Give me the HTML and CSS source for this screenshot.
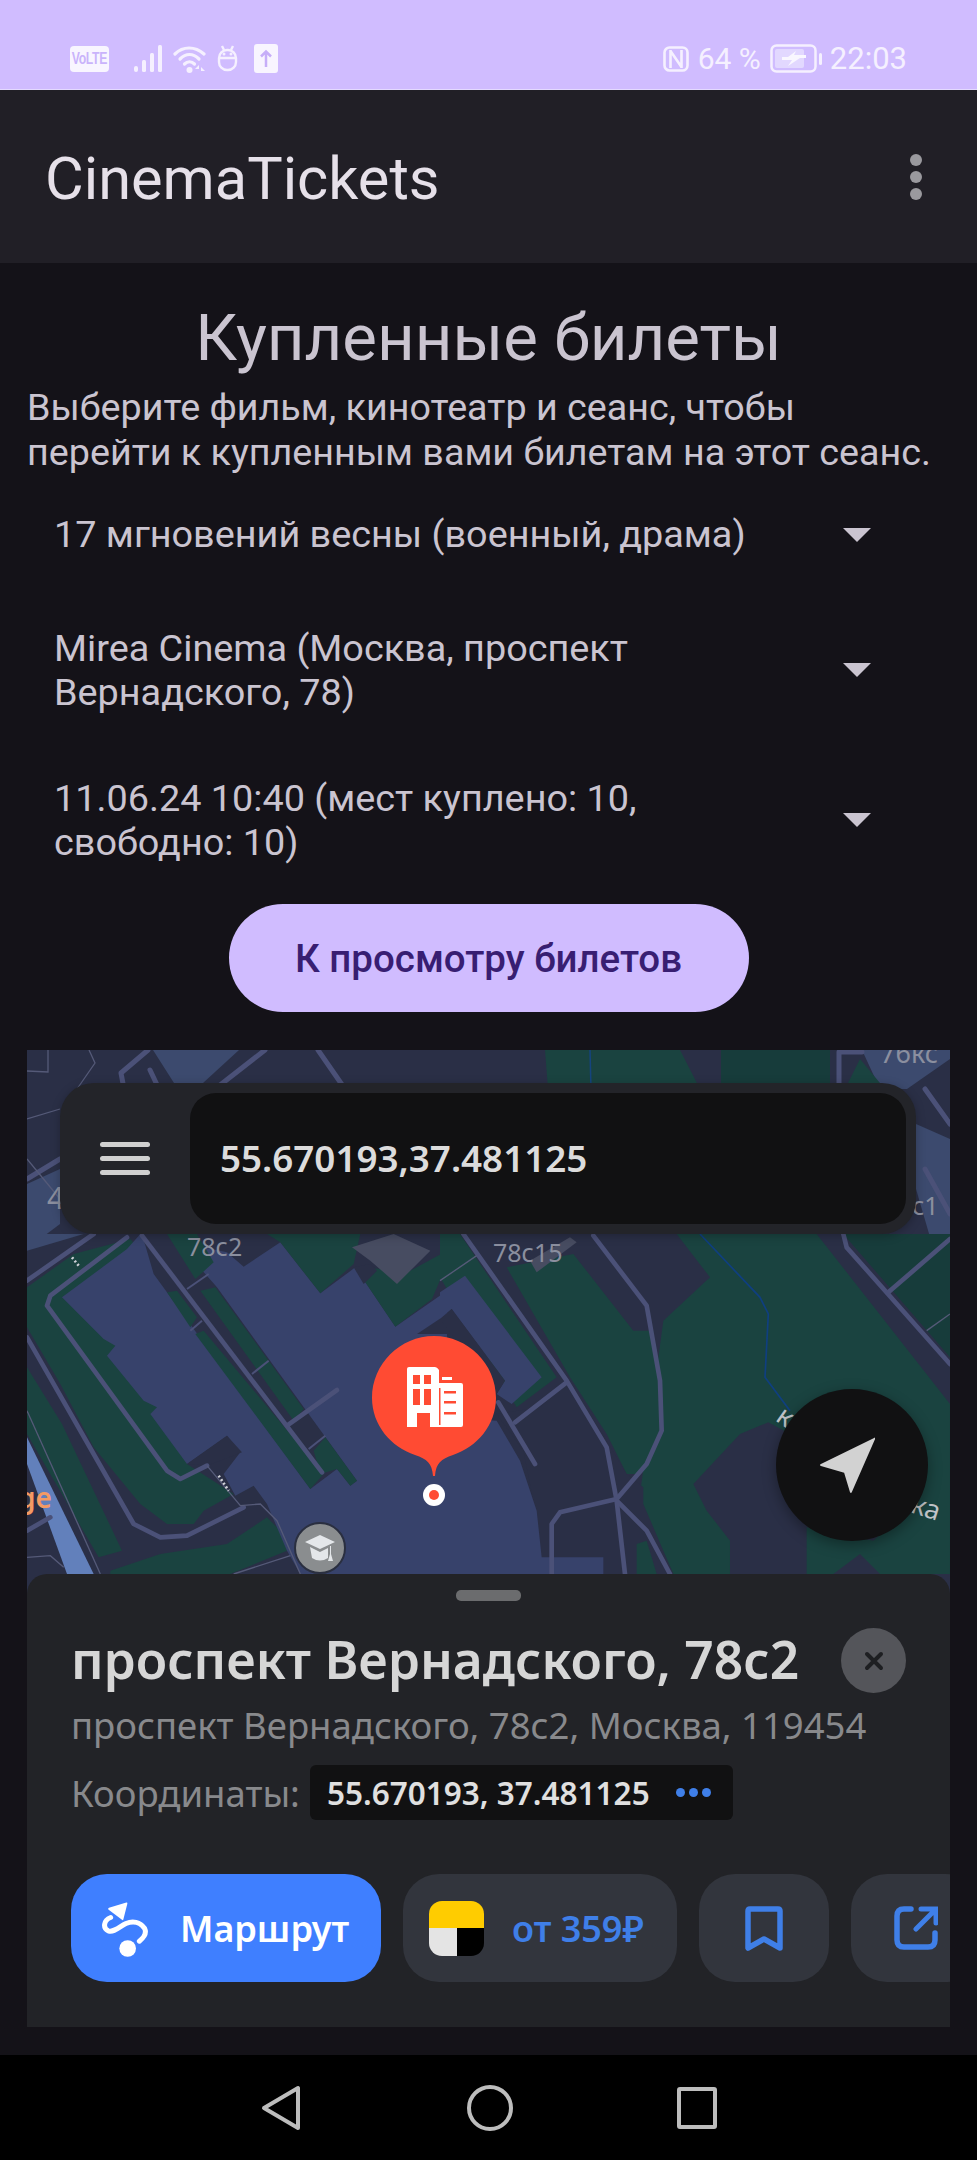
FILE: index.html
```html
<!DOCTYPE html>
<html lang="ru">
<head>
<meta charset="utf-8">
<title>CinemaTickets</title>
<link rel="stylesheet" href="styles.css">
</head>
<body>
<div class="phone">
  <header class="status">
    <div class="status-left">
      <span class="volte"><b>VoLTE</b></span>
      <svg class="ic-signal" viewBox="0 0 29 27"><g fill="#f5f0ff"><rect x="0" y="21" width="4" height="6" rx="2"/><rect x="8" y="15" width="4" height="12" rx="1.5"/><rect x="16" y="8" width="4" height="19" rx="1.5"/><rect x="24" y="0" width="4" height="27" rx="1.5"/></g></svg>
      <svg class="ic-wifi" viewBox="0 0 34 28"><g fill="none" stroke="#f5f0ff" stroke-width="3.2" stroke-linecap="round"><path d="M2 9C10 1 22 1 31 9"/><path d="M7 14C13 8 20 8 26 14"/><path d="M11.500 19C14.500 16 18.500 16 21.500 19"/></g><circle cx="16.500" cy="25" r="3" fill="#f5f0ff"/><path d="M26 20l-4 4h4zM28 22l4 4-4 0z" fill="#f5f0ff"/></svg>
      <svg class="ic-robot" viewBox="0 0 21 27"><g fill="none" stroke="#f5f0ff" stroke-width="2.400"><rect x="2" y="5" width="17" height="20" rx="8"/><path d="M2 13H19M5 1l2 4M16 1l-2 4"/></g><circle cx="7" cy="9" r="1.500" fill="#f5f0ff"/><circle cx="14" cy="9" r="1.500" fill="#f5f0ff"/></svg>
      <svg class="ic-up" viewBox="0 0 24 29"><rect width="24" height="29" rx="3" fill="#f8f5ff"/><path d="M12 23V8M7 12.500l5-5 5 5" fill="none" stroke="#c6aef8" stroke-width="2.500"/></svg>
    </div>
    <div class="status-right">
      <svg class="ic-nfc" viewBox="0 0 26 26"><rect x="1.500" y="1.500" width="23" height="23" rx="5" fill="none" stroke="#f5f0ff" stroke-width="2.600"/><path d="M7.500 4V22M18.500 4V22M7.500 5L18.500 21" fill="none" stroke="#f5f0ff" stroke-width="2.600"/></svg>
      <span class="pct">64 %</span>
      <svg class="ic-batt" viewBox="0 0 52 29"><rect x="1.500" y="1.500" width="44" height="26" rx="5" fill="none" stroke="#f5f0ff" stroke-width="2.500"/><rect x="5" y="5" width="29" height="19" rx="2" fill="#e2d8ff"/><path d="M26 7l-8 6h-6v3h10l-4 6 12-8h6v-3H24z" fill="#f9f7ff"/><rect x="49" y="9" width="3" height="12" rx="1.500" fill="#f5f0ff"/></svg>
      <span class="time">22:03</span>
    </div>
  </header>

  <div class="appbar">
    <span class="app-title">CinemaTickets</span>
    <div class="kebab"><i></i><i></i><i></i></div>
  </div>

  <main class="content">
    <h1 class="heading">Купленные билеты</h1>
    <p class="lead">Выберите фильм, кинотеатр и сеанс, чтобы перейти к купленным вами билетам на этот сеанс.</p>

    <div class="select"><span class="select-text">17 мгновений весны (военный, драма)</span><i class="caret"></i></div>
    <div class="select"><span class="select-text">Mirea Cinema (Москва, проспект Вернадского, 78)</span><i class="caret"></i></div>
    <div class="select"><span class="select-text">11.06.24 10:40 (мест куплено: 10, свободно: 10)</span><i class="caret"></i></div>

    <div class="cta-wrap"><button class="cta">К просмотру билетов</button></div>

    <section class="map">
      <svg class="map-art" viewBox="27 1051 923 549">
        <rect x="27" y="1051" width="923" height="549" fill="#2a2f46"/>

        <!-- top strip and side strips, in page pixels -->
        <polygon class="slate" points="153,1051 239,1051 203,1084 174,1084"/>
        <polygon class="green" points="545,1051 680,1051 700,1090 548,1090"/>
        <polygon class="green2" points="721,1051 830,1051 830,1090 721,1090"/>
        <polygon class="slate" points="862,1051 950,1051 950,1060 907,1090 880,1090"/>
        <polygon class="green" points="845,1090 860,1060 885,1090"/>
        <polygon class="slate" points="916,1125 950,1140 950,1245 932,1245 916,1190"/>
        <polygon class="slate" points="27,1185 60,1170 60,1225 40,1240 27,1235"/>
        <g class="road r-page">
          <polyline points="148,1051 121,1074 124,1090"/>
          <polyline points="150,1071 159,1090"/>
          <polyline points="265,1051 215,1090"/>
          <polyline points="318,1051 345,1090"/>
          <polyline points="839,1090 839,1053 862,1053"/>
          <polyline points="925,1090 950,1125"/>
          <polyline points="925,1170 950,1215"/>
          <polyline points="27,1180 60,1160"/>
        </g>
        <g class="thin t-page">
          <polyline points="27,1072 48,1073 48,1051"/>
          <polyline points="89,1051 95,1064 77,1090"/>
          <polyline points="27,1120 60,1110"/>
          <polyline points="27,1160 60,1200"/>
        </g>
        <polyline class="water w-page" points="590,1051 591,1090"/>

        <!-- left half of the lower map: 3 units per page pixel -->
        <g transform="translate(27 1235) scale(.33333)">
          <polygon class="slate" points="0,0 170,0 0,50"/>
          <polygon class="green" points="0,160 140,60 310,15 400,120 400,300 480,690 620,780 530,830 500,870 420,870 340,810 200,640 100,450 0,280"/>
          <polygon class="green" points="0,400 105,570 285,950 215,970 0,600"/>
          <polygon class="green" points="250,1020 250,1010 400,960 600,930 720,850 770,900 780,950 610,1020"/>
          <polygon class="blue" points="340,0 600,55 650,98 760,25 880,178 985,100 1105,278 1260,170 1260,1020 820,1020 780,950 720,810 680,755 625,785 590,720 640,655 600,605 480,690 370,540 390,520 350,500 240,365 265,335 230,315 105,190 300,45"/>
          <polygon class="dark" points="345,0 430,0 570,160 990,740 970,755 930,705 850,765 380,120"/>
          <polygon class="green" points="420,0 510,0 560,85 505,135"/>
          <polygon class="green" points="420,175 450,170 510,250 490,280"/>
          <polygon class="green" points="520,170 565,160 830,525 800,560"/>
          <polygon class="green" points="505,300 530,290 890,720 850,765"/>
          <polygon class="green" points="860,650 895,610 990,740 970,755 930,705 880,720"/>
          <polygon class="green" points="720,0 1000,0 980,90 880,178 760,25"/>
          <polygon class="green" points="985,100 1150,110 1260,50 1260,90 1215,195 1105,278"/>
          <polygon class="bldg" points="975,40 1100,0 1210,50 1110,150 1030,80"/>
          <polygon class="dark" points="980,100 1030,90 1050,110 1010,150"/>
          <polygon class="dark" points="1170,300 1260,240 1260,300"/>
          <polygon class="dark" points="480,690 600,605 645,655 540,695 480,690"/>
          <polygon class="river" points="0,610 0,690 120,1020 200,1020"/>
          <polyline class="road" points="0,140 200,0"/>
          <polyline class="road" points="300,10 70,185 60,215 420,710 460,735 540,695"/>
          <polyline class="road" points="0,310 320,870 400,910 480,905 650,820"/>
          <polyline class="road" points="345,5 885,715"/>
          <polyline class="road" points="780,575 930,468"/>
          <polyline class="road" points="0,890 70,850"/>
          <polyline class="bar" points="480,165 545,120"/>
          <polyline class="bar" points="490,290 525,260"/>
          <polyline class="bar" points="675,420 725,380"/>
          <polyline class="bar" points="845,645 895,605"/>
          <polyline class="line" points="540,695 640,815 700,810 750,860 820,1020"/>
          <polyline class="line" points="0,530 220,1020"/>
          <polyline class="line" points="620,1020 790,965"/>
          <polyline class="line" points="0,970 70,965 110,1000"/>
          <polyline class="dots" points="575,725 605,770"/>
          <polyline class="dots" points="135,70 155,95"/>
        </g>

        <!-- right half of the lower map -->
        <g transform="translate(440 1235) scale(.33333)">
          <polygon class="green" points="780,0 1130,0 1530,510 1530,1020 700,1020 610,820 600,780 670,260 810,130 710,0"/>
          <polygon class="green2" points="1210,0 1530,0 1530,370"/>
          <polygon class="green" points="200,100 400,60 580,290 640,290 665,590 600,720 560,720 500,600 390,430"/>
          <polygon class="green" points="0,0 60,0 350,430 230,520 0,130"/>
          <polygon class="blue" points="0,175 75,125 305,430 215,510 170,480 195,440 35,225 0,255"/>
          <polygon class="dark" points="0,255 35,225 195,440 170,480"/>
          <polygon class="dark" points="300,520 380,440 500,620 560,720 610,760 610,810 700,1020 300,1020 290,850 250,650 170,540"/>
          <polygon class="blue" points="0,550 170,560 240,680 290,830 305,970 490,970 490,1020 0,1020"/>
          <polygon class="dark" points="760,750 900,600 985,565 1050,600 1240,700 1430,800 1300,920 1100,880 1100,1020 870,1020 870,920 800,830"/>
          <polygon class="dark" points="1180,1020 1260,960 1320,1020"/>
          <polygon class="green" points="590,1020 590,930 620,920 650,1020"/>
          <polygon class="bldg" points="270,80 390,10 410,25 290,115"/>
          <polyline class="road" points="70,0 380,440 500,640 530,800 555,1020"/>
          <polyline class="road" points="460,5 620,215 660,440 665,590 620,690 530,795 360,835 335,870 335,1020"/>
          <polyline class="road" points="530,800 620,890 690,1020"/>
          <polyline class="road" points="380,445 225,565"/>
          <polyline class="road" points="175,505 285,690"/>
          <polyline class="road" points="1210,0 1220,40 1530,390"/>
          <polyline class="road" points="1345,175 1530,15"/>
          <polyline class="line" points="0,140 110,65"/>
          <polyline class="line" points="1460,290 1530,240"/>
          <polyline class="stream" points="780,0 960,190 985,240 975,430 1050,530"/>
        </g>
      </svg>

      <span class="lbl lbl-a">78с2</span>
      <span class="lbl lbl-b">78с15</span>
      <span class="lbl lbl-c">4</span>
      <span class="lbl lbl-d">с1</span>
      <span class="lbl lbl-e">76кс</span>
      <span class="lbl lbl-f">ка</span>
      <span class="lbl lbl-g">к</span>
      <span class="lbl-org">ge</span>

      <svg class="pin" viewBox="0 0 130 210">
        <path d="M65 3C99 3 127 31 127 65C127 92 108 114 84 122C72 126 67 130 66 143H64C63 130 58 126 46 122C22 114 3 92 3 65C3 31 31 3 65 3Z" fill="#ff4b33"/>
        <path d="M38 36Q38 34 40 34H66Q68 34 70 37V50H92Q94 50 94 52V92Q94 94 92 94H38Z" fill="#fff"/>
        <rect x="73" y="44" width="10" height="3" fill="#fff"/>
        <g fill="#ff4b33"><rect x="44" y="42" width="7" height="9"/><rect x="55" y="42" width="7" height="9"/><rect x="44" y="56" width="7" height="16"/><rect x="55" y="56" width="7" height="16"/><path d="M48 94V80H61V94Z"/><rect x="70" y="55" width="1.500" height="37"/><rect x="75" y="58" width="12" height="2.500"/><rect x="75" y="68" width="12" height="2.500"/><rect x="75" y="79" width="12" height="2.500"/></g>
        <circle cx="65" cy="162" r="11" fill="#fff"/>
        <circle cx="65" cy="162" r="5" fill="#ff4b33"/>
      </svg>

      <svg class="edu" viewBox="0 0 52 52">
        <circle cx="26" cy="26" r="25" fill="#8a8d8f" stroke="#2a2f40" stroke-width="2"/>
        <path d="M26 13L41 20L26 27L11 20Z" fill="#e4e7ea"/>
        <path d="M16 25L26 30L34 26V36Q26 41 18 36Z" fill="#e4e7ea"/>
        <path d="M37 24V32L39 39H34L36 32V24Z" fill="#e4e7ea"/>
      </svg>

      <div class="searchbar">
        <div class="burger"><i></i><i></i><i></i></div>
        <div class="searchfield">55.670193,37.481125</div>
      </div>

      <div class="fab">
        <svg class="fab-arrow" viewBox="0 0 60 60"><path d="M57 2L2 29Q0 30 2 31L26 38L32 58Q33 60 34 58L58 3Q58 1 57 2Z" fill="#d2d2d2"/></svg>
      </div>

      <div class="sheet">
        <div class="handle"></div>
        <div class="sheet-head">
          <div class="place">проспект Вернадского, 78с2</div>
          <div class="close"><svg viewBox="0 0 20 20"><path d="M3 3L17 17M17 3L3 17" stroke="#1e1f22" stroke-width="4" stroke-linecap="round"/></svg></div>
        </div>
        <div class="address">проспект Вернадского, 78с2, Москва, 119454</div>
        <div class="coords">
          <span class="coords-label">Координаты:</span>
          <span class="chip">55.670193, 37.481125<span class="chip-dots"><i></i><i></i><i></i></span></span>
        </div>
        <div class="actions">
          <div class="act act-route">
            <svg class="route-ic" viewBox="180 120 150 170"><path d="M207 143L259 127Q263 126 262 131L250 178Q249 182 246 179L205 148Q203 145 207 143Z" fill="#fff"/><path d="M212 172C190 180 188 205 205 212C222 218 240 198 258 190C278 182 300 185 314 205C320 218 312 232 298 243" fill="none" stroke="#fff" stroke-width="15" stroke-linecap="round"/><circle cx="263" cy="265" r="25" fill="#fff"/></svg>
            <span>Маршрут</span>
          </div>
          <div class="act act-taxi">
            <span class="taxi-ic"><i class="t1"></i><i class="t2"></i><i class="t3"></i></span>
            <span class="taxi-price">от 359₽</span>
          </div>
          <div class="act act-icon">
            <svg class="bm" viewBox="0 0 38 45"><path d="M3 42V5Q3 3 5 3H33Q35 3 35 5V42L19 33Z" fill="none" stroke="#3f7fe8" stroke-width="5.500" stroke-linejoin="round"/></svg>
          </div>
          <div class="act act-icon">
            <svg class="sh" viewBox="0 0 44 44"><path d="M17 3H10Q3 3 3 10V34Q3 41 10 41H34Q41 41 41 34V27" fill="none" stroke="#3f7fe8" stroke-width="5.500" stroke-linecap="round"/><path d="M22 23L40 5M27 3H42V17" fill="none" stroke="#3f7fe8" stroke-width="5" stroke-linecap="round"/></svg>
          </div>
        </div>
      </div>
    </section>
  </main>

  <nav class="navbar">
    <svg class="nav-back" viewBox="0 0 40 46"><path d="M37 3V43L3 23Z" fill="none" stroke="#bdbdbd" stroke-width="4" stroke-linejoin="round"/></svg>
    <svg class="nav-home" viewBox="0 0 46 46"><circle cx="23" cy="23" r="21" fill="none" stroke="#bdbdbd" stroke-width="4"/></svg>
    <svg class="nav-recent" viewBox="0 0 40 42"><rect x="2" y="2" width="36" height="38" rx="1" fill="none" stroke="#bdbdbd" stroke-width="4"/></svg>
  </nav>
</div>
</body>
</html>
```

FILE: styles.css
```css
* { box-sizing: border-box; }
html, body { margin: 0; padding: 0; background: #141218; }
body { font-family: Roboto, "Liberation Sans", sans-serif; }
.phone { width: 977px; height: 2160px; display: flex; flex-direction: column; overflow: hidden; }

/* status bar */
.status { height: 90px; flex: none; background: #d0bcff; border-bottom: 1px solid #e4daff; display: flex; justify-content: space-between; align-items: center; padding: 28px 70px 0; color: #f5f0ff; }
.status-left, .status-right { display: flex; align-items: center; }
.volte { width: 39px; height: 26px; background: #f8f5ff; border-radius: 4px; color: #c9b3fb; display: flex; align-items: center; justify-content: center; overflow: hidden; }
.volte b { display: inline-block; font: 700 17px/26px "Liberation Sans", sans-serif; letter-spacing: -.5px; transform: scaleX(.72); }
.ic-signal { width: 29px; height: 27px; margin-left: 25px; }
.ic-wifi { width: 34px; height: 28px; margin-left: 10px; }
.ic-robot { width: 21px; height: 27px; margin-left: 10px; }
.ic-up { width: 24px; height: 29px; margin-left: 16px; }
.ic-nfc { width: 26px; height: 26px; }
.pct { font-size: 30px; margin-left: 9px; line-height: 34px; }
.ic-batt { width: 52px; height: 29px; margin-left: 9px; }
.time { font-size: 31px; margin-left: 8px; line-height: 34px; }

/* app bar */
.appbar { height: 173px; flex: none; background: #211f26; display: flex; align-items: center; justify-content: space-between; padding: 0 55px 0 45px; }
.app-title { font-size: 59.500px; color: #e6e0e9; padding-top: 5px; }
.kebab { display: flex; flex-direction: column; gap: 5px; }
.kebab i { width: 12px; height: 12px; border-radius: 50%; background: #9a999e; }

/* main */
.content { flex: 1; min-height: 0; padding: 34px 27px 27px; display: flex; flex-direction: column; }
.heading { margin: 0; font-size: 65.400px; line-height: 82px; font-weight: 400; color: #cac4d0; text-align: center; flex: none; }
.lead { margin: 6px 0 0; max-width: 912px; font-size: 37.700px; line-height: 44.500px; color: #cac4d0; flex: none; }
.select { min-height: 121px; flex: none; display: flex; align-items: center; justify-content: space-between; padding: 30.500px 79px 30.500px 27px; color: #cac4d0; }
.select-text { font-size: 37.800px; line-height: 44.500px; max-width: 700px; }
.caret { width: 0; height: 0; border-left: 14px solid transparent; border-right: 14px solid transparent; border-top: 14px solid #cac4d0; flex: none; }
.cta-wrap { display: flex; justify-content: center; margin-top: 9px; flex: none; }
.cta { width: 520px; height: 108px; border: 0; border-radius: 54px; background: #d0bcff; color: #381e72; font: 500 38.500px Roboto, sans-serif; }

/* map */
.map { position: relative; height: 977px; margin-top: 38px; overflow: hidden; background: #2a2f46; flex: none; }
.map-art { position: absolute; left: 0; top: 0; width: 923px; height: 549px; }
.green { fill: #1a4340; }
.green2 { fill: #173c3b; }
.blue { fill: #37426b; }
.dark { fill: #2a2f46; }
.slate { fill: #3c4a6e; }
.bldg { fill: #474c61; }
.river { fill: #6280bb; }
.road { fill: none; stroke: #4b5178; stroke-width: 14; stroke-linecap: round; stroke-linejoin: round; }
.r-page { stroke-width: 5; }
.r-page polyline { fill: none; }
.bar { fill: none; stroke: #4b5178; stroke-width: 6; }
.line { fill: none; stroke: #555a78; stroke-width: 4; }
.thin polyline { fill: none; stroke: #555a78; stroke-width: 1.300px; }
.dots { fill: none; stroke: #cfd1d8; stroke-width: 8; stroke-dasharray: 6 7; }
.water { fill: none; stroke: #15447e; stroke-width: 1.500px; }
.stream { fill: none; stroke: #0f3f80; stroke-width: 5; }

.lbl { position: absolute; color: #8b8f9f; font: 400 25px/30px "Noto Sans", sans-serif; }
.lbl-a { left: 160px; top: 181px; }
.lbl-b { left: 466px; top: 187px; }
.lbl-c { left: 20px; top: 133px; font-size: 30px; }
.lbl-d { left: 885px; top: 140px; }
.lbl-e { left: 853px; top: -12px; font-size: 27px; }
.lbl-f { left: 885px; top: 442px; font-size: 27px; transform: rotate(18deg); color: #c0c3c8; }
.lbl-g { left: 752px; top: 351px; font-size: 27px; transform: rotate(35deg); color: #c0c3c8; }
.lbl-org { position: absolute; left: -9px; top: 431px; color: #f49a63; font: 600 28px/32px "Noto Sans", sans-serif; }

.pin { position: absolute; left: 342px; top: 283px; width: 130px; height: 210px; }
.edu { position: absolute; left: 267px; top: 472px; width: 52px; height: 52px; }

.searchbar { position: absolute; left: 33px; top: 33px; width: 856px; height: 151px; border-radius: 34px; background: #232429; display: flex; align-items: center; padding: 10px 10px 10px 40px; box-shadow: 0 2px 10px rgba(0,0,0,.25); }
.burger { width: 50px; display: flex; flex-direction: column; gap: 9px; flex: none; }
.burger i { height: 5px; border-radius: 3px; background: #d0d0d0; }
.searchfield { margin-left: 40px; flex: 1; height: 131px; border-radius: 26px; background: #111112; color: #dcdcdc; font: 600 36.800px/131px "Noto Sans", sans-serif; padding-left: 30px; }

.fab { position: absolute; left: 749px; top: 339px; width: 152px; height: 152px; border-radius: 50%; background: #111112; display: flex; align-items: center; justify-content: center; box-shadow: 0 4px 14px rgba(0,0,0,.35); }
.fab-arrow { width: 58px; height: 58px; margin-right: 8px; }

.sheet { position: absolute; left: 0; right: 0; bottom: 0; height: 453px; background: #222327; border-radius: 20px 20px 0 0; padding: 16px 0 0 44px; overflow: hidden; }
.handle { position: absolute; left: 429px; top: 16px; width: 65px; height: 11px; border-radius: 5px; background: #6b6c6e; }
.sheet-head { display: flex; align-items: center; justify-content: space-between; padding: 38px 44px 0 0; height: 103px; }
.place { font: 600 51.500px/65px "Noto Sans", sans-serif; color: #d6d6d6; margin-top: -2px; }
.close { width: 65px; height: 65px; border-radius: 50%; background: #54555a; display: flex; align-items: center; justify-content: center; }
.close svg { width: 20px; height: 20px; }
.address { font: 400 36.500px/46px "Noto Sans", sans-serif; color: #88898c; margin-top: 9px; }
.coords { display: flex; align-items: center; margin-top: 17px; }
.coords-label { font: 400 36.500px/46px "Noto Sans", sans-serif; color: #88898c; width: 239px; flex: none; }
.chip { height: 55px; width: 423px; border-radius: 6px; background: #111112; color: #e0e0e0; font: 600 31.500px/55px "Noto Sans", sans-serif; padding-left: 17px; display: flex; align-items: center; }
.chip-dots { display: flex; gap: 4px; margin-left: 26px; }
.chip-dots i { width: 9px; height: 9px; border-radius: 50%; background: #3f7fe8; }
.actions { display: flex; gap: 22px; margin-top: 54px; }
.act { height: 108px; border-radius: 36px; background: #32353d; display: flex; align-items: center; flex: none; }
.act-route { width: 310px; background: #3f7fff; color: #fff; font: 600 36px "Noto Sans", sans-serif; padding-left: 29px; gap: 30px; }
.route-ic { width: 50px; height: 57px; flex: none; }
.act-taxi { width: 274px; padding-left: 26px; gap: 28px; }
.taxi-ic { width: 55px; height: 55px; border-radius: 13px; overflow: hidden; display: grid; grid-template-columns: 1fr 1fr; grid-template-rows: 1fr 1fr; }
.taxi-ic .t1 { grid-column: 1 / 3; background: #fc0; }
.taxi-ic .t2 { background: #e4e4e4; }
.taxi-ic .t3 { background: #000; }
.taxi-price { color: #3f7fe8; font: 600 36px "Noto Sans", sans-serif; }
.act-icon { width: 130px; justify-content: center; }
.bm { width: 38px; height: 45px; }
.sh { width: 44px; height: 44px; }

/* nav */
.navbar { height: 105px; flex: none; background: #000; display: flex; align-items: center; justify-content: center; gap: 164px; }
.nav-back { width: 40px; height: 46px; margin-right: 2px; }
.nav-home { width: 46px; height: 46px; }
.nav-recent { width: 40px; height: 42px; }
```
